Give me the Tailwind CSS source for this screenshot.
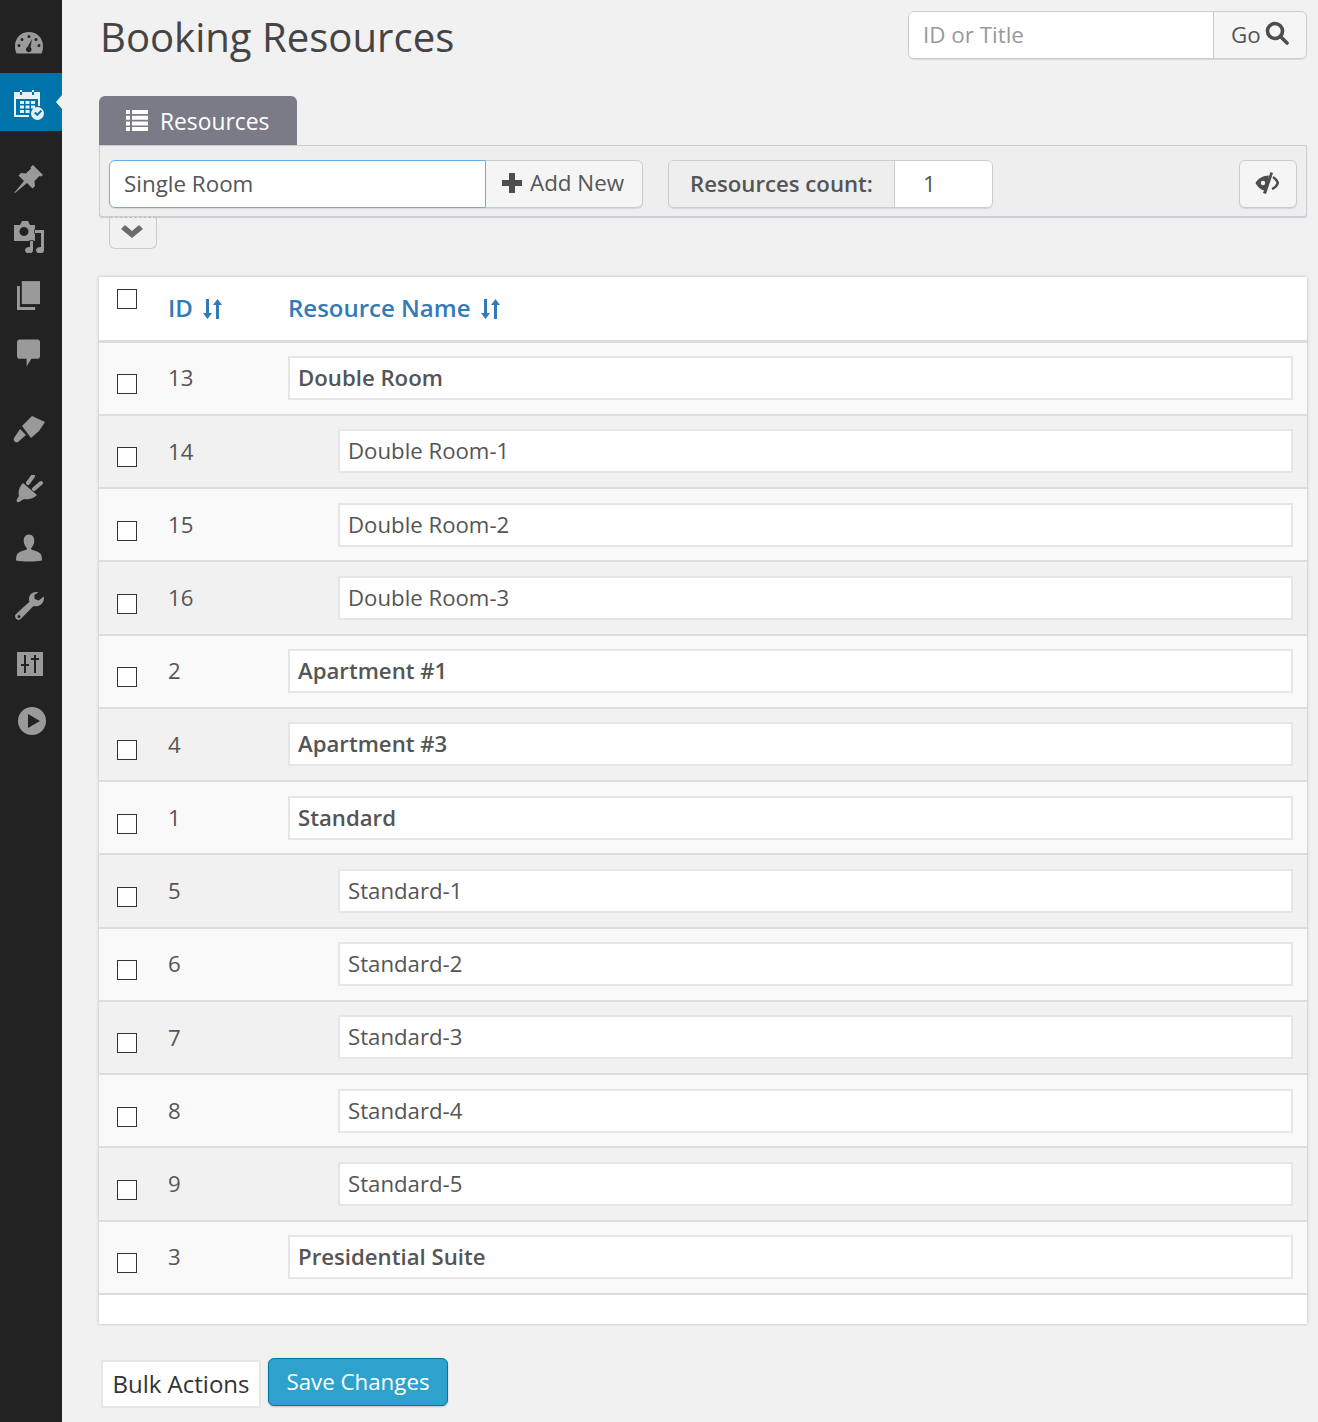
<!DOCTYPE html>
<html lang="en">
<head>
  <meta charset="UTF-8" />
  <title>Booking Resources</title>
  <script src="https://cdn.jsdelivr.net/npm/@tailwindcss/browser@4"></script>
</head>
<body class="bg-[#f1f1f1] font-['Open_Sans',sans-serif] text-[#555]">
<div class="flex h-[1422px] overflow-hidden">

  <!-- sidebar -->
  <nav class="w-[62px] shrink-0 bg-[#222] flex flex-col items-start pt-[30px] text-[#9a9a9a]">
    <svg class="w-[30px] h-[26px] mb-[17px] ml-[14px]" viewBox="0 0 30 26" fill="currentColor"><path fill-rule="evenodd" d="M15 2C7 2 1 8 1 16c0 3 .6 5.500 1.500 7.500h25C28.400 21.500 29 19 29 16 29 8 23 2 15 2zM15 5a1.500 1.500 0 110 3 1.500 1.500 0 010-3zM8 8a1.500 1.500 0 110 3 1.500 1.500 0 010-3zM22 8a1.500 1.500 0 110 3 1.500 1.500 0 010-3zM5 14a1.500 1.500 0 110 3 1.500 1.500 0 010-3zM25 14a1.500 1.500 0 110 3 1.500 1.500 0 010-3zM18 9l-1.500 8.200a2.800 2.800 0 11-3 -.3z"/></svg>
    <div class="relative w-full h-[58px] bg-[#0073aa] pl-[13px] pt-[17px] text-white/90">
      <svg class="w-[32px] h-[30px]" viewBox="0 0 32 30" fill="currentColor"><path fill-rule="evenodd" d="M1 2h26v14h-2V9H3v16h13v2H1zM7 0h2v5H7zM19 0h2v5h-2zM7 11h4v3H7zM12.500 11h4v3h-4zM18 11h4v3h-4zM7 15.500h4v3H7zM12.500 15.500h4v3h-4zM18 15.500h4v3h-4zM7 20h4v3H7zM12.500 20h4v3h-4z"/><path fill-rule="evenodd" d="M24.500 17a6.500 6.500 0 100 13 6.500 6.500 0 000-13zm-3.500 6l1.500-1.300 1.700 1.800 3.500-3.500 1.400 1.300-4.900 5z"/></svg>
      <span class="absolute right-0 top-[22px] w-0 h-0 border-y-[7px] border-y-transparent border-r-[6px] border-r-[#f1f1f1]"></span>
    </div>
    <svg class="w-[30px] h-[30px] mt-[33px] ml-[14px]" viewBox="0 0 30 30" fill="currentColor"><path d="M19 1l10 10-2 1.500-1.500-.5-5 5 .5 5-2.500 2.500-5.500-5.500L1 29l-.5-.5 9.500-11.500-5.500-5.500L7 9l5 .5 5-5-.5-1.500z"/></svg>
    <svg class="w-[32px] h-[32px] mt-[27px] ml-[13px]" viewBox="0 0 32 32" fill="currentColor"><path fill-rule="evenodd" d="M1 4h6l2-4h6l2 4h5v16H1zM11 6a4.500 4.500 0 100 9 4.500 4.500 0 000-9z"/><path stroke="#222" stroke-width="1.500" paint-order="stroke" d="M22 9h9v20a4 3.300 0 11-3-3V12h-6zM17 20h3v9a4 3.300 0 11-3-3z"/></svg>
    <svg class="w-[23px] h-[29px] mt-[28px] ml-[17px]" viewBox="0 0 24 30" fill="currentColor"><path d="M5 0h19v24H5z"/><path d="M0 5h3v22h16v3H0z"/></svg>
    <svg class="w-[23px] h-[28px] mt-[29px] ml-[17px]" viewBox="0 0 24 28" fill="currentColor"><path d="M3 0h18a3 3 0 013 3v14a3 3 0 01-3 3h-6l-5 8v-8H3a3 3 0 01-3-3V3a3 3 0 013-3z"/></svg>
    <svg class="w-[32px] h-[28px] mt-[49px] ml-[13px]" viewBox="0 0 32 28" fill="currentColor"><path d="M7 13l6 6-8 7a3 3 0 01-4-4z"/><path d="M9 10L19 0l13 6-6 9-8 7z"/></svg>
    <svg class="w-[28px] h-[28px] mt-[31px] ml-[16px]" viewBox="0 0 28 28" fill="currentColor"><path d="M7 8l14 12c-4 4-9 5-13 4l-5 3c-2 1-3-1-2-3l2-3C2 17 3 12 7 8z"/><path d="M12 8l5-7M18 14l7-6" stroke="currentColor" stroke-width="4" stroke-linecap="round" fill="none"/></svg>
    <svg class="w-[26px] h-[28px] mt-[31px] ml-[16px]" viewBox="0 0 27 28" fill="currentColor"><path d="M13.500 0c3.500 0 5.500 3 5.500 6.500S17 13 15.500 14.500c0 2 7 2 10 5.500 1 1.500 1.500 4 1.500 7-8 1.500-19 1.500-27 0 0-3 .5-5.500 1.500-7 3-3.500 10-3.500 10-5.500C10 13 8 10 8 6.500S10 0 13.500 0z"/></svg>
    <svg class="w-[29px] h-[28px] mt-[30px] ml-[15px]" viewBox="0 0 29 28" fill="currentColor"><path fill-rule="evenodd" d="M21 0c-4 0-7 3-7 7 0 1 .2 2 .5 2.800L1 22c-1.500 1.500-1 3.500 0 4.800 1.500 1.500 3.500 1.500 5 0L18.500 14c5 1.500 10.500-2 10.500-8l-.3-1.500-5 4-4-1.500-.5-4 4.300-2.500C22.500 .2 21.800 0 21 0zM4 23a1.500 1.500 0 110 3 1.500 1.500 0 010-3z"/></svg>
    <svg class="w-[26px] h-[24px] mt-[32px] ml-[17px]" viewBox="0 0 26 24" fill="currentColor"><path fill-rule="evenodd" d="M0 0h26v24H0zM7 3v9H4v2h3v7h2v-7h3v-2H9V3zM17 3v3h-3v2h3v13h2V8h3V6h-3V3z"/></svg>
    <svg class="w-[28px] h-[28px] mt-[31px] ml-[18px]" viewBox="0 0 28 28" fill="currentColor"><path fill-rule="evenodd" d="M14 0a14 14 0 100 28 14 14 0 000-28zM10 7l12 7-12 7z"/></svg>
  </nav>

  <!-- main -->
  <main class="flex-1 pl-[37px] pr-[11px]">
    <div class="flex justify-between h-[96px]">
      <h1 class="ml-[1px] text-[40.1px] leading-[50px] mt-[12px] text-[#444]">Booking Resources</h1>
      <div class="mt-[11px] w-[399px] h-[48px] flex border border-[#ccc] rounded-md shadow-[0_1px_1px_rgba(0,0,0,0.1)] text-[22.4px] overflow-hidden">
        <div class="flex-1 bg-white pl-[14px] leading-[45px] text-[#999]">ID or Title</div>
        <div class="w-[93px] bg-[#f5f5f5] border-l border-[#ccc] flex items-center pl-[17px] gap-[4px]">
          <span>Go</span>
          <svg class="w-[24px] h-[24px] -mt-[4px]" viewBox="0 0 24 24" fill="none" stroke="#4d4d4d" stroke-width="3.600"><circle cx="10" cy="10" r="7.500"/><path d="M15.500 15.500L22 22" stroke-linecap="round"/></svg>
        </div>
      </div>
    </div>

    <div class="w-[198px] h-[49px] bg-[#7b7b88] rounded-t-md flex items-center pl-[27px] gap-[12px] text-white text-[22.8px] font-medium">
      <svg class="w-[22px] h-[21px]" viewBox="0 0 22 21" fill="currentColor"><path d="M0 0h4v4H0zM6 0h16v4H6zM0 5.700h4v4H0zM6 5.700h16v4H6zM0 11.400h4v4H0zM6 11.400h16v4H6zM0 17h4v4H0zM6 17h16v4H6z"/></svg>
      <span class="mt-[3px]">Resources</span>
    </div>
    <div class="h-[72px] bg-[#eee] border border-[#ccc] rounded-b-[3px] shadow-[0_1px_1px_rgba(90,90,160,0.25)] flex items-start pt-[14px] pl-[9px] pr-[9px]">
      <div class="w-[534px] h-[48px] flex rounded-md shadow-[0_1px_1px_rgba(0,0,0,0.1)] text-[22.4px]">
        <div class="w-[377px] bg-white border border-[#66afe9] rounded-l-md pl-[14px] leading-[45px]">Single Room</div>
        <div class="flex-1 bg-[#f5f5f5] border border-l-0 border-[#ccc] rounded-r-md flex items-center pl-[15px] gap-[7px] pb-[3px]">
          <svg class="w-[22px] h-[22px]" viewBox="0 0 22 22" fill="#4d4d4d"><path d="M8 1h6v7h7v6h-7v7H8v-7H1V8h7z"/></svg>
          <span>Add New</span>
        </div>
      </div>
      <div class="ml-[25px] w-[325px] h-[48px] flex border border-[#ccc] rounded-md shadow-[0_1px_1px_rgba(0,0,0,0.1)] text-[22.2px] overflow-hidden">
        <div class="w-[226px] bg-[#eee] border-r border-[#ccc] pl-[21px] leading-[45px] font-semibold">Resources count:</div>
        <div class="flex-1 bg-white pl-[28px] leading-[45px]">1</div>
      </div>
      <div class="ml-auto w-[58px] h-[48px] bg-[#f5f5f5] border border-[#ccc] rounded-md shadow-[0_1px_1px_rgba(0,0,0,0.1)] flex items-center justify-center pb-[3px] pr-[2px]">
        <svg class="w-[24px] h-[22px]" viewBox="0 0 24 22" fill="#4d4d4d"><path fill-rule="evenodd" d="M14 3.500C8 3.500 2.500 7 .5 11c2 4 6 7.500 10 7.500zM8 8.800a2.200 2.200 0 110 4.400 2.200 2.200 0 010-4.400z"/><path d="M15.500 0l2.500 1-7 21-3-1z"/><path d="M18 5c2.500 1.500 4 3.500 5 6-1 2.500-2.500 4.500-6 6" fill="none" stroke="#4d4d4d" stroke-width="2.400"/></svg>
      </div>
    </div>
    <div class="ml-[10px] w-[48px] h-[32px] bg-[#f1f1f1] border border-t-0 border-[#ccc] rounded-b-md relative flex items-center justify-center pb-[4px] pr-[2px]">
      <span class="absolute left-0 right-0 top-0 border-t border-dashed border-[#bbb]"></span>
      <svg class="w-[22px] h-[14px]" viewBox="0 0 22 14" fill="#6b6b6b"><path d="M0 5l4-4 7 6 7-6 4 4-11 9z"/></svg>
    </div>

    <!-- table -->
    <div class="mt-[28px] bg-white shadow-[0_0_3px_rgba(0,0,0,0.25)] text-[22.2px]">
      <div class="h-[65.5px] border-b-[3px] border-[#ddd] flex text-[#337ab7] font-semibold text-[24px]">
        <div class="w-[69px] pl-[18px] pt-[12px]"><div class="w-[20px] h-[20px] border border-[#333] bg-white"></div></div>
        <div class="w-[120px] flex items-center gap-[10px]">ID
          <svg class="w-[19px] h-[20px] mt-[2px]" viewBox="0 0 19 20" fill="currentColor"><path d="M3 0h3v14h3l-4.500 6L0 14h3zM13 6h-3l4.500-6L19 6h-3v14h-3z"/></svg>
        </div>
        <div class="flex items-center gap-[10px]">Resource Name
          <svg class="w-[19px] h-[20px] mt-[2px]" viewBox="0 0 19 20" fill="currentColor"><path d="M3 0h3v14h3l-4.500 6L0 14h3zM13 6h-3l4.500-6L19 6h-3v14h-3z"/></svg>
        </div>
      </div>

      <div class="h-[73.25px] bg-[#f9f9f9] border-b-2 border-[#ddd] flex items-center">
        <div class="w-[69px] pl-[18px] pt-[12px]"><div class="w-[20px] h-[20px] border border-[#333] bg-white"></div></div>
        <div class="w-[120px]">13</div>
        <div class="flex-1 mr-[14px] h-[44px] bg-white border-2 border-[#e6e6e6] pl-[8px] leading-[40.5px] font-semibold">Double Room</div>
      </div>
      <div class="h-[73.25px] bg-[#f1f1f1] border-b-2 border-[#ddd] flex items-center">
        <div class="w-[69px] pl-[18px] pt-[12px]"><div class="w-[20px] h-[20px] border border-[#333] bg-white"></div></div>
        <div class="w-[170px]">14</div>
        <div class="flex-1 mr-[14px] h-[44px] bg-white border-2 border-[#e6e6e6] pl-[8px] leading-[40.5px]">Double Room-1</div>
      </div>
      <div class="h-[73.25px] bg-[#f9f9f9] border-b-2 border-[#ddd] flex items-center">
        <div class="w-[69px] pl-[18px] pt-[12px]"><div class="w-[20px] h-[20px] border border-[#333] bg-white"></div></div>
        <div class="w-[170px]">15</div>
        <div class="flex-1 mr-[14px] h-[44px] bg-white border-2 border-[#e6e6e6] pl-[8px] leading-[40.5px]">Double Room-2</div>
      </div>
      <div class="h-[73.25px] bg-[#f1f1f1] border-b-2 border-[#ddd] flex items-center">
        <div class="w-[69px] pl-[18px] pt-[12px]"><div class="w-[20px] h-[20px] border border-[#333] bg-white"></div></div>
        <div class="w-[170px]">16</div>
        <div class="flex-1 mr-[14px] h-[44px] bg-white border-2 border-[#e6e6e6] pl-[8px] leading-[40.5px]">Double Room-3</div>
      </div>
      <div class="h-[73.25px] bg-[#f9f9f9] border-b-2 border-[#ddd] flex items-center">
        <div class="w-[69px] pl-[18px] pt-[12px]"><div class="w-[20px] h-[20px] border border-[#333] bg-white"></div></div>
        <div class="w-[120px]">2</div>
        <div class="flex-1 mr-[14px] h-[44px] bg-white border-2 border-[#e6e6e6] pl-[8px] leading-[40.5px] font-semibold">Apartment #1</div>
      </div>
      <div class="h-[73.25px] bg-[#f1f1f1] border-b-2 border-[#ddd] flex items-center">
        <div class="w-[69px] pl-[18px] pt-[12px]"><div class="w-[20px] h-[20px] border border-[#333] bg-white"></div></div>
        <div class="w-[120px]">4</div>
        <div class="flex-1 mr-[14px] h-[44px] bg-white border-2 border-[#e6e6e6] pl-[8px] leading-[40.5px] font-semibold">Apartment #3</div>
      </div>
      <div class="h-[73.25px] bg-[#f9f9f9] border-b-2 border-[#ddd] flex items-center">
        <div class="w-[69px] pl-[18px] pt-[12px]"><div class="w-[20px] h-[20px] border border-[#333] bg-white"></div></div>
        <div class="w-[120px]">1</div>
        <div class="flex-1 mr-[14px] h-[44px] bg-white border-2 border-[#e6e6e6] pl-[8px] leading-[40.5px] font-semibold">Standard</div>
      </div>
      <div class="h-[73.25px] bg-[#f1f1f1] border-b-2 border-[#ddd] flex items-center">
        <div class="w-[69px] pl-[18px] pt-[12px]"><div class="w-[20px] h-[20px] border border-[#333] bg-white"></div></div>
        <div class="w-[170px]">5</div>
        <div class="flex-1 mr-[14px] h-[44px] bg-white border-2 border-[#e6e6e6] pl-[8px] leading-[40.5px]">Standard-1</div>
      </div>
      <div class="h-[73.25px] bg-[#f9f9f9] border-b-2 border-[#ddd] flex items-center">
        <div class="w-[69px] pl-[18px] pt-[12px]"><div class="w-[20px] h-[20px] border border-[#333] bg-white"></div></div>
        <div class="w-[170px]">6</div>
        <div class="flex-1 mr-[14px] h-[44px] bg-white border-2 border-[#e6e6e6] pl-[8px] leading-[40.5px]">Standard-2</div>
      </div>
      <div class="h-[73.25px] bg-[#f1f1f1] border-b-2 border-[#ddd] flex items-center">
        <div class="w-[69px] pl-[18px] pt-[12px]"><div class="w-[20px] h-[20px] border border-[#333] bg-white"></div></div>
        <div class="w-[170px]">7</div>
        <div class="flex-1 mr-[14px] h-[44px] bg-white border-2 border-[#e6e6e6] pl-[8px] leading-[40.5px]">Standard-3</div>
      </div>
      <div class="h-[73.25px] bg-[#f9f9f9] border-b-2 border-[#ddd] flex items-center">
        <div class="w-[69px] pl-[18px] pt-[12px]"><div class="w-[20px] h-[20px] border border-[#333] bg-white"></div></div>
        <div class="w-[170px]">8</div>
        <div class="flex-1 mr-[14px] h-[44px] bg-white border-2 border-[#e6e6e6] pl-[8px] leading-[40.5px]">Standard-4</div>
      </div>
      <div class="h-[73.25px] bg-[#f1f1f1] border-b-2 border-[#ddd] flex items-center">
        <div class="w-[69px] pl-[18px] pt-[12px]"><div class="w-[20px] h-[20px] border border-[#333] bg-white"></div></div>
        <div class="w-[170px]">9</div>
        <div class="flex-1 mr-[14px] h-[44px] bg-white border-2 border-[#e6e6e6] pl-[8px] leading-[40.5px]">Standard-5</div>
      </div>
      <div class="h-[73.25px] bg-[#f9f9f9] border-b-2 border-[#ddd] flex items-center">
        <div class="w-[69px] pl-[18px] pt-[12px]"><div class="w-[20px] h-[20px] border border-[#333] bg-white"></div></div>
        <div class="w-[120px]">3</div>
        <div class="flex-1 mr-[14px] h-[44px] bg-white border-2 border-[#e6e6e6] pl-[8px] leading-[40.5px] font-semibold">Presidential Suite</div>
      </div>
      <div class="h-[29.25px]"></div>
    </div>

    <div class="mt-[34px] ml-[2px] flex items-start gap-[7px] text-[22.3px]">
      <div class="mt-[2px] w-[160px] h-[48px] bg-white border-2 border-[#e6e6e6] leading-[44px] text-center text-[#333] text-[24px]">Bulk Actions</div>
      <div class="w-[180px] h-[48px] bg-[#2ea2cc] border border-[#0074a2] rounded-md shadow-[0_1px_2px_rgba(0,0,0,0.2)] leading-[46px] text-center text-white">Save Changes</div>
    </div>
  </main>
</div>
</body>
</html>
